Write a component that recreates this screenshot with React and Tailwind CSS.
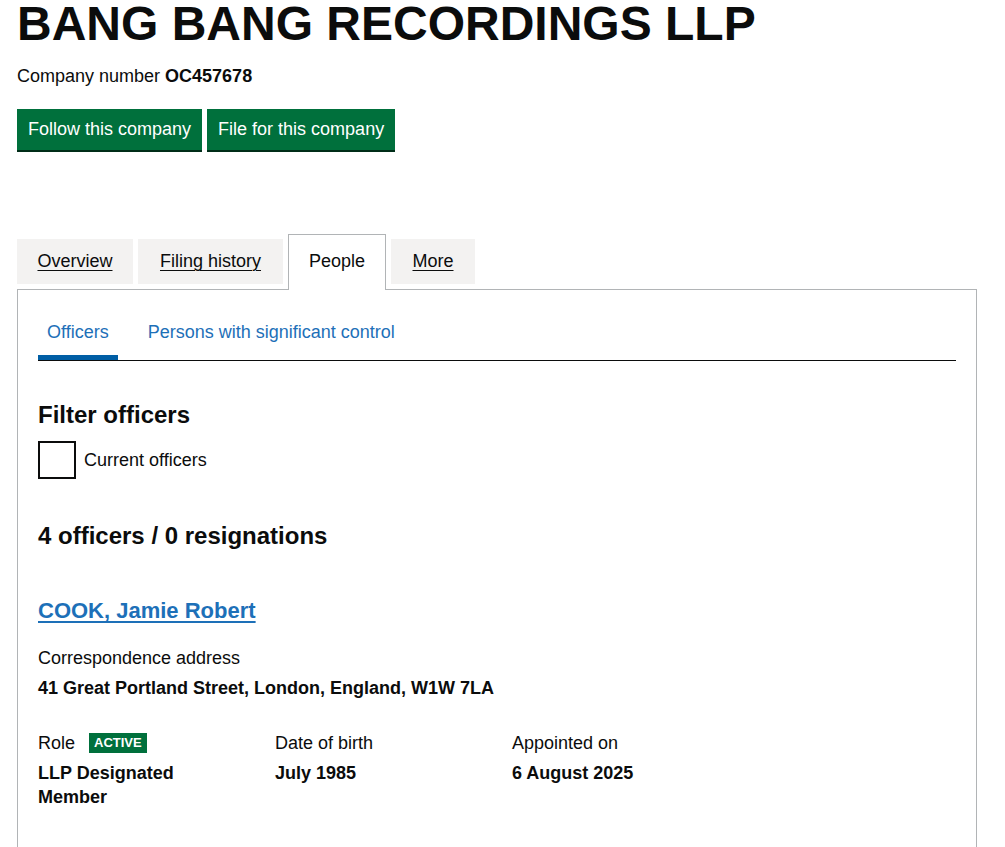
import React from 'react';

const tabs = [
  { label: 'Overview', width: 'w-[116px]' },
  { label: 'Filing history', width: 'w-[145px]' },
  { label: 'People', width: 'w-[98px]', active: true },
  { label: 'More', width: 'w-[84px]' },
];

const App = () => {
  return (
    <div className="min-h-screen bg-white text-[#0b0c0c] font-['Liberation_Sans',Arial,sans-serif]">
      <div className="ml-[17px] w-[960px]">
        {/* Header */}
        <h1 className="text-[48px] leading-[48px] font-bold">BANG BANG RECORDINGS LLP</h1>
        <p className="mt-4 text-[18px] leading-[24px]">
          Company number <strong className="font-bold">OC457678</strong>
        </p>
        <div className="mt-[21px] flex gap-[5px]">
          <button className="h-[41px] px-[11px] bg-[#00703c] text-white text-[18px] shadow-[0_2px_0_#002d18]">
            Follow this company
          </button>
          <button className="h-[41px] px-[11px] bg-[#00703c] text-white text-[18px] shadow-[0_2px_0_#002d18]">
            File for this company
          </button>
        </div>

        {/* Tabs */}
        <ul className="mt-[84px] flex items-start gap-[5px] relative z-10">
          {tabs.map((tab) =>
            tab.active ? (
              <li
                key={tab.label}
                className={`${tab.width} -mb-px bg-white border border-b-0 border-[#b1b4b6] pt-[14px] pb-[16px] text-center text-[18px] leading-[25px]`}
              >
                {tab.label}
              </li>
            ) : (
              <li
                key={tab.label}
                className={`${tab.width} mt-[5px] bg-[#f3f2f1] py-[10px] text-center text-[18px] leading-[25px]`}
              >
                <a href="#" className="underline underline-offset-[3px] decoration-1">
                  {tab.label}
                </a>
              </li>
            )
          )}
        </ul>

        {/* Panel */}
        <section className="border border-[#b1b4b6] px-5 pt-5 pb-16">
          <nav className="flex gap-[21px] border-b border-[#0b0c0c]">
            <a href="#" className="px-[9px] pt-[10px] pb-[10px] border-b-[5px] border-[#005ea5] text-[18px] leading-[25px] text-[#1d70b8]">
              Officers
            </a>
            <a href="#" className="px-[9px] pt-[10px] pb-[10px] border-b-[5px] border-transparent text-[18px] leading-[25px] text-[#1d70b8]">
              Persons with significant control
            </a>
          </nav>

          <h2 className="mt-[39px] text-[24px] leading-[30px] font-bold">Filter officers</h2>
          <label className="mt-[11px] flex items-center gap-2">
            <span className="w-[38px] h-[38px] border-2 border-[#0b0c0c] bg-white"></span>
            <span className="text-[18px] leading-[25px]">Current officers</span>
          </label>

          <h2 className="mt-[42px] text-[24px] leading-[30px] font-bold">4 officers / 0 resignations</h2>

          {/* Officer */}
          <div className="mt-[45px]">
            <h3 className="text-[22px] leading-[30px] font-bold">
              <a href="#" className="text-[#1d70b8] underline decoration-2 underline-offset-[3px]">
                COOK, Jamie Robert
              </a>
            </h3>
            <p className="mt-[20px] text-[18px] leading-[25px]">Correspondence address</p>
            <p className="mt-[5px] text-[18px] leading-[25px] font-bold">
              41 Great Portland Street, London, England, W1W 7LA
            </p>

            <div className="mt-[30px] -mx-[15px] grid grid-cols-4">
              <div className="px-[15px]">
                <div className="flex items-center gap-[14px] text-[18px] leading-[24px]">
                  <span>Role</span>
                  <span className="px-[5px] h-[20px] flex items-center bg-[#00703c] text-white text-[13px] font-bold uppercase">
                    Active
                  </span>
                </div>
                <p className="mt-[6px] max-w-[190px] text-[18px] leading-[24px] font-bold">LLP Designated Member</p>
              </div>
              <div className="px-[15px]">
                <p className="text-[18px] leading-[24px]">Date of birth</p>
                <p className="mt-[6px] text-[18px] leading-[24px] font-bold">July 1985</p>
              </div>
              <div className="px-[15px]">
                <p className="text-[18px] leading-[24px]">Appointed on</p>
                <p className="mt-[6px] text-[18px] leading-[24px] font-bold">6 August 2025</p>
              </div>
            </div>
          </div>
        </section>
      </div>
    </div>
  );
};

export default App;
